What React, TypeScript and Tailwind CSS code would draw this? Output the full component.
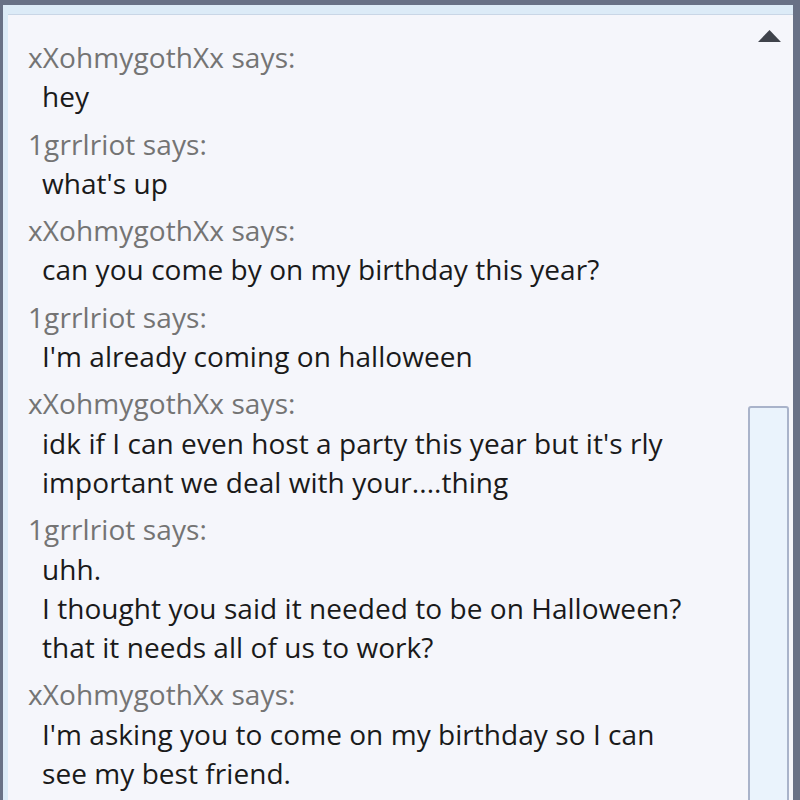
import React from "react";

type Msg = { name: string; lines: string[] };

const msgs: Msg[] = [
  { name: "xXohmygothXx", lines: ["hey"] },
  { name: "1grrlriot", lines: ["what's up"] },
  { name: "xXohmygothXx", lines: ["can you come by on my birthday this year?"] },
  { name: "1grrlriot", lines: ["I'm already coming on halloween"] },
  {
    name: "xXohmygothXx",
    lines: [
      "idk if I can even host a party this year but it's rly",
      "important we deal with your....thing",
    ],
  },
  {
    name: "1grrlriot",
    lines: [
      "uhh.",
      "I thought you said it needed to be on Halloween?",
      "that it needs all of us to work?",
    ],
  },
  {
    name: "xXohmygothXx",
    lines: [
      "I'm asking you to come on my birthday so I can",
      "see my best friend.",
    ],
  },
];

export default function App() {
  return (
    <div className="w-[800px] h-[800px] overflow-hidden bg-[#687186] pl-[3px] pt-[5px] pr-[7px]">
      <div className="h-[900px] bg-[#f5f6fb] border-t-[9px] border-l-[5px] border-[#dcebf7] flex">
        <div className="h-full w-full border-t border-[#c9d6e6] flex">
          <div
            className="flex-1 pl-[20px] pt-[23px] flex flex-col gap-[8px]"
            style={{ fontFamily: '"Open Sans", "Noto Sans", sans-serif' }}
          >
            {msgs.map((m, i) => (
              <div key={i} className="flex flex-col">
                <div className="text-[28px] leading-[39.3px] text-[#747474] tracking-[0.1px] whitespace-nowrap">
                  {m.name} says:
                </div>
                {m.lines.map((l, j) => (
                  <div
                    key={j}
                    className="pl-[14px] text-[28px] leading-[39.3px] text-[#1a1a1a] tracking-[0.05px] whitespace-nowrap"
                  >
                    {l}
                  </div>
                ))}
              </div>
            ))}
          </div>
          <div className="w-[45px] shrink-0 flex flex-col items-center pt-[14px] pr-[4px]">
            <svg width="25" height="14" viewBox="0 0 25 14" className="ml-[2px]">
              <polygon points="12.5,1 24,13 1,13" fill="#3f434b" />
            </svg>
            <div className="mt-[363px] w-[41px] h-[500px] rounded-[3px] border-2 border-[#a9b3ca] bg-[#eaf3fc]" />
          </div>
        </div>
      </div>
    </div>
  );
}
